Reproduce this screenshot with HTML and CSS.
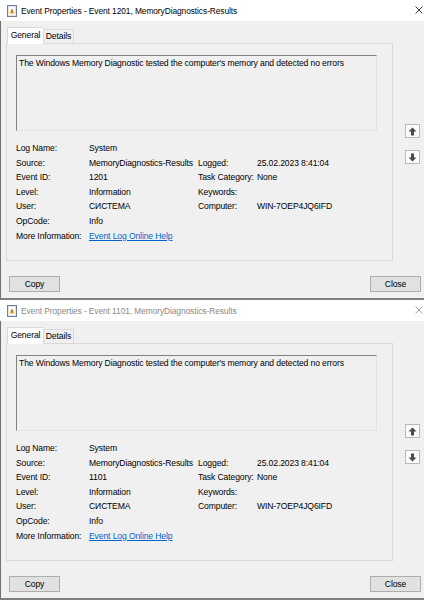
FILE: index.html
```html
<!DOCTYPE html>
<html>
<head>
<meta charset="utf-8">
<link rel="stylesheet" href="styles.css">
</head>
<body>
<div class="dialog active">
  <div class="titlebar">
    <svg class="appicon" width="10" height="12" viewBox="0 0 10 12"><rect x="0.5" y="0.5" width="9" height="11" fill="#dde4ec" stroke="#6b7f99"/><rect x="2" y="2" width="6" height="8" fill="#fff"/><path d="M5 3.2 L7.6 8.6 L2.4 8.6Z" fill="#f0c02c"/><rect x="4.5" y="4.6" width="1" height="2.6" fill="#c3262a"/><rect x="4.5" y="7.6" width="1" height="0.8" fill="#c3262a"/></svg>
    <span class="title">Event Properties - Event 1201, MemoryDiagnostics-Results</span>
    <svg class="close" width="8" height="8" viewBox="0 0 8 8"><path d="M0.5 0.5 L7.5 7.5 M7.5 0.5 L0.5 7.5" stroke="currentColor" stroke-width="0.9" fill="none"/></svg>
  </div>
  <div class="body">
    <div class="content">
      <div class="tabarea">
        <div class="tabs">
          <div class="tab selected">General</div>
          <div class="tab details">Details</div>
        </div>
        <div class="panel">
          <div class="desc">The Windows Memory Diagnostic tested the computer's memory and detected no errors</div>
          <div class="info">
            <span>Log Name:</span><span>System</span><span></span><span></span>
            <span>Source:</span><span>MemoryDiagnostics-Results</span><span>Logged:</span><span>25.02.2023 8:41:04</span>
            <span>Event ID:</span><span>1201</span><span>Task Category:</span><span>None</span>
            <span>Level:</span><span>Information</span><span>Keywords:</span><span></span>
            <span>User:</span><span>СИСТЕМА</span><span>Computer:</span><span>WIN-7OEP4JQ6IFD</span>
            <span>OpCode:</span><span>Info</span><span></span><span></span>
            <span>More Information:</span><span class="wide"><span class="link">Event Log Online Help</span></span>
          </div>
        </div>
      </div>
      <div class="side">
        <div class="arrowbtn"><svg width="9" height="9" viewBox="0 0 9 9"><path d="M4.5 0.5 L8.5 4.5 L6 4.5 L6 8.5 L3 8.5 L3 4.5 L0.5 4.5Z" fill="#4a4a4a"/></svg></div>
        <div class="arrowbtn"><svg width="9" height="9" viewBox="0 0 9 9"><path d="M4.5 8.5 L8.5 4.5 L6 4.5 L6 0.5 L3 0.5 L3 4.5 L0.5 4.5Z" fill="#4a4a4a"/></svg></div>
      </div>
    </div>
    <div class="buttons">
      <div class="btn">Copy</div>
      <div class="btn">Close</div>
    </div>
  </div>
</div>
<div class="dialog inactive">
  <div class="titlebar">
    <svg class="appicon" width="10" height="12" viewBox="0 0 10 12"><rect x="0.5" y="0.5" width="9" height="11" fill="#dde4ec" stroke="#6b7f99"/><rect x="2" y="2" width="6" height="8" fill="#fff"/><path d="M5 3.2 L7.6 8.6 L2.4 8.6Z" fill="#f0c02c"/><rect x="4.5" y="4.6" width="1" height="2.6" fill="#c3262a"/><rect x="4.5" y="7.6" width="1" height="0.8" fill="#c3262a"/></svg>
    <span class="title">Event Properties - Event 1101, MemoryDiagnostics-Results</span>
    <svg class="close" width="8" height="8" viewBox="0 0 8 8"><path d="M0.5 0.5 L7.5 7.5 M7.5 0.5 L0.5 7.5" stroke="currentColor" stroke-width="0.9" fill="none"/></svg>
  </div>
  <div class="body">
    <div class="content">
      <div class="tabarea">
        <div class="tabs">
          <div class="tab selected">General</div>
          <div class="tab details">Details</div>
        </div>
        <div class="panel">
          <div class="desc">The Windows Memory Diagnostic tested the computer's memory and detected no errors</div>
          <div class="info">
            <span>Log Name:</span><span>System</span><span></span><span></span>
            <span>Source:</span><span>MemoryDiagnostics-Results</span><span>Logged:</span><span>25.02.2023 8:41:04</span>
            <span>Event ID:</span><span>1101</span><span>Task Category:</span><span>None</span>
            <span>Level:</span><span>Information</span><span>Keywords:</span><span></span>
            <span>User:</span><span>СИСТЕМА</span><span>Computer:</span><span>WIN-7OEP4JQ6IFD</span>
            <span>OpCode:</span><span>Info</span><span></span><span></span>
            <span>More Information:</span><span class="wide"><span class="link">Event Log Online Help</span></span>
          </div>
        </div>
      </div>
      <div class="side">
        <div class="arrowbtn"><svg width="9" height="9" viewBox="0 0 9 9"><path d="M4.5 0.5 L8.5 4.5 L6 4.5 L6 8.5 L3 8.5 L3 4.5 L0.5 4.5Z" fill="#4a4a4a"/></svg></div>
        <div class="arrowbtn"><svg width="9" height="9" viewBox="0 0 9 9"><path d="M4.5 8.5 L8.5 4.5 L6 4.5 L6 0.5 L3 0.5 L3 4.5 L0.5 4.5Z" fill="#4a4a4a"/></svg></div>
      </div>
    </div>
    <div class="buttons">
      <div class="btn">Copy</div>
      <div class="btn">Close</div>
    </div>
  </div>
</div>
</body>
</html>
```
FILE: styles.css
```css
html, body {
  margin: 0;
  padding: 0;
}
body {
  width: 424px;
  height: 600px;
  overflow: hidden;
  background: #f0f0f0;
  font-family: "Liberation Sans", Arial, sans-serif;
  font-size: 8.6px;
  letter-spacing: -0.12px;
  color: #000;
}
.dialog {
  height: 300px;
  box-sizing: border-box;
  border-bottom: 2px solid #808080;
  background: #f0f0f0;
}
.titlebar {
  height: 21px;
  background: #fff;
  display: flex;
  align-items: center;
  padding-left: 7px;
  box-sizing: border-box;
}
.appicon {
  flex: none;
  margin-right: 4px;
}
.title {
  flex: 1;
  font-size: 8.4px;
  letter-spacing: -0.08px;
  white-space: nowrap;
}
.close {
  flex: none;
  margin-right: 1px;
  margin-top: -1px;
}
.active .title { color: #000; }
.active .close { color: #222; }
.inactive .title { color: #8a8a8a; }
.inactive .close { color: #9a9a9a; }
.body {
  height: 277px;
  box-sizing: border-box;
  border-left: 1px solid #707070;
}
.content {
  display: flex;
  padding-top: 6px;
  padding-left: 5px;
}
.tabarea {
  width: 387px;
  flex: none;
}
.tabs {
  display: flex;
  align-items: flex-end;
  height: 16px;
  padding-left: 1px;
}
.tab {
  height: 14px;
  box-sizing: border-box;
  border: 1px solid #d9d9d9;
  border-bottom: none;
  line-height: 13px;
  background: #f0f0f0;
  white-space: nowrap;
  text-align: center;
}
.tab.selected {
  width: 36px;
  height: 17px;
  margin-bottom: -1px;
  background: #fff;
  line-height: 14px;
  position: relative;
  z-index: 1;
  border-right: none;
}
.tab.details {
  width: 31px;
}
.panel {
  height: 218px;
  box-sizing: border-box;
  border: 1px solid #d9d9d9;
  padding: 11px 0 0 9px;
}
.desc {
  width: 361px;
  height: 76px;
  box-sizing: border-box;
  border: 1px solid;
  border-color: #828282 #e3e3e3 #e3e3e3 #828282;
  padding: 1px 2px;
  line-height: 12px;
  background: #f0f0f0;
}
.info {
  display: grid;
  grid-template-columns: 73px 109px 59px auto;
  margin-top: 10px;
  line-height: 14.6px;
  white-space: nowrap;
}
.info .wide {
  grid-column: 2 / 5;
}
.link {
  color: #0066cc;
  text-decoration: underline;
}
.side {
  padding-top: 97px;
  margin-left: 12px;
}
.arrowbtn {
  width: 15px;
  height: 14px;
  box-sizing: border-box;
  border: 1px solid #b9b9b9;
  background: #fbfbfb;
  display: flex;
  align-items: center;
  justify-content: center;
  margin-bottom: 12px;
}
.buttons {
  display: flex;
  justify-content: space-between;
  margin-top: 15px;
  padding: 0 3px 0 8px;
}
.btn {
  width: 51px;
  height: 16px;
  box-sizing: border-box;
  border: 1px solid #adadad;
  background: #e1e1e1;
  text-align: center;
  line-height: 14px;
}
```
